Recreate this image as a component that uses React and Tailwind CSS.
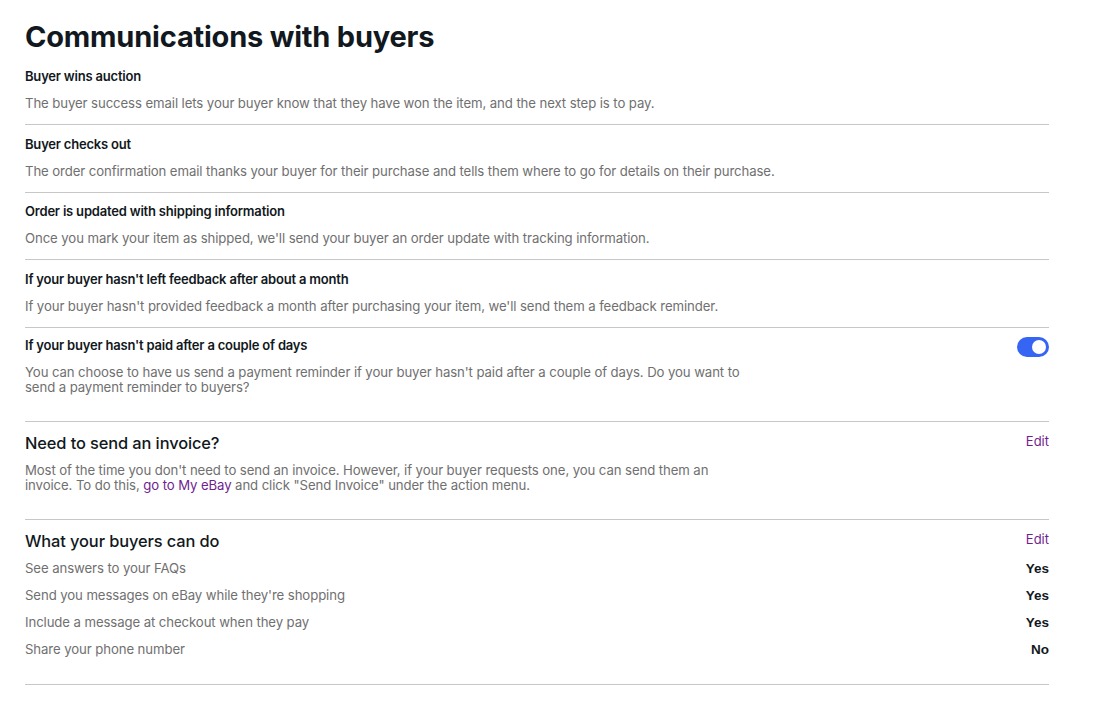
const notices = [
  {
    title: 'Buyer wins auction',
    text: 'The buyer success email lets your buyer know that they have won the item, and the next step is to pay.',
  },
  {
    title: 'Buyer checks out',
    text: 'The order confirmation email thanks your buyer for their purchase and tells them where to go for details on their purchase.',
  },
  {
    title: 'Order is updated with shipping information',
    text: "Once you mark your item as shipped, we'll send your buyer an order update with tracking information.",
  },
  {
    title: "If your buyer hasn't left feedback after about a month",
    text: "If your buyer hasn't provided feedback a month after purchasing your item, we'll send them a feedback reminder.",
  },
]

const permissions = [
  { label: 'See answers to your FAQs', value: 'Yes' },
  { label: "Send you messages on eBay while they're shopping", value: 'Yes' },
  { label: 'Include a message at checkout when they pay', value: 'Yes' },
  { label: 'Share your phone number', value: 'No' },
]

function App() {
  return (
    <div className="min-h-screen bg-white font-['Inter','Liberation_Sans',sans-serif] text-[#111820]">
      <div className="w-[1024px] ml-[25px] pt-[19px]">
        <h1 className="text-[29px] leading-[36px] font-bold tracking-[-0.2px] mb-[11px]">
          Communications with buyers
        </h1>

        {notices.map((n, i) => (
          <div
            key={n.title}
            className={`pb-[13px] border-b border-[#c7c7c7] ${i === 0 ? 'pt-0' : 'pt-[8.6px]'}`}
          >
            <h3 className="text-[13px] leading-[20px] font-semibold tracking-[-0.2px]">{n.title}</h3>
            <p className="mt-[9px] text-[13.2px] leading-[16px] text-[#707070] tracking-[-0.1px]">{n.text}</p>
          </div>
        ))}

        <div className="pt-[7px] pb-[26px] border-b border-[#c7c7c7] flex justify-between">
          <div>
            <h3 className="text-[13px] leading-[20px] font-semibold tracking-[-0.2px]">
              If your buyer hasn't paid after a couple of days
            </h3>
            <p className="mt-[10px] max-w-[740px] text-[13.2px] leading-[15px] text-[#707070] tracking-[-0.1px]">
              You can choose to have us send a payment reminder if your buyer hasn't paid after a couple of days. Do you want to send a payment reminder to buyers?
            </p>
          </div>
          <button className="mt-[2px] w-[32px] h-[20px] rounded-full bg-[#3665f3] flex items-center justify-end px-[3px] shrink-0">
            <span className="w-[14px] h-[14px] rounded-full bg-white" />
          </button>
        </div>

        <div className="pt-[10px] pb-[26px] border-b border-[#c7c7c7]">
          <div className="flex justify-between items-start">
            <h2 className="text-[16.4px] leading-[22px] font-medium tracking-[-0.1px]">Need to send an invoice?</h2>
            <a className="text-[13px] leading-[18px] text-[#6f1f8f]">Edit</a>
          </div>
          <p className="mt-[9px] max-w-[700px] text-[13.2px] leading-[15px] text-[#707070] tracking-[-0.1px]">
            Most of the time you don't need to send an invoice. However, if your buyer requests one, you can send them an invoice. To do this, <a className="text-[#6f1f8f]">go to My eBay</a> and click "Send Invoice" under the action menu.
          </p>
        </div>

        <div className="pt-[10px] pb-[20px] border-b border-[#c7c7c7]">
          <div className="flex justify-between items-start">
            <h2 className="text-[16.4px] leading-[22px] font-medium tracking-[-0.1px]">What your buyers can do</h2>
            <a className="text-[13px] leading-[18px] text-[#6f1f8f]">Edit</a>
          </div>
          <div className="mt-[4px] flex flex-col">
            {permissions.map((p) => (
              <div key={p.label} className="flex justify-between h-[27px] items-center">
                <span className="text-[13.2px] text-[#707070] tracking-[-0.1px]">{p.label}</span>
                <span className="text-[13.5px] font-bold font-['Liberation_Sans',sans-serif]">{p.value}</span>
              </div>
            ))}
          </div>
        </div>
      </div>
    </div>
  )
}

export default App
